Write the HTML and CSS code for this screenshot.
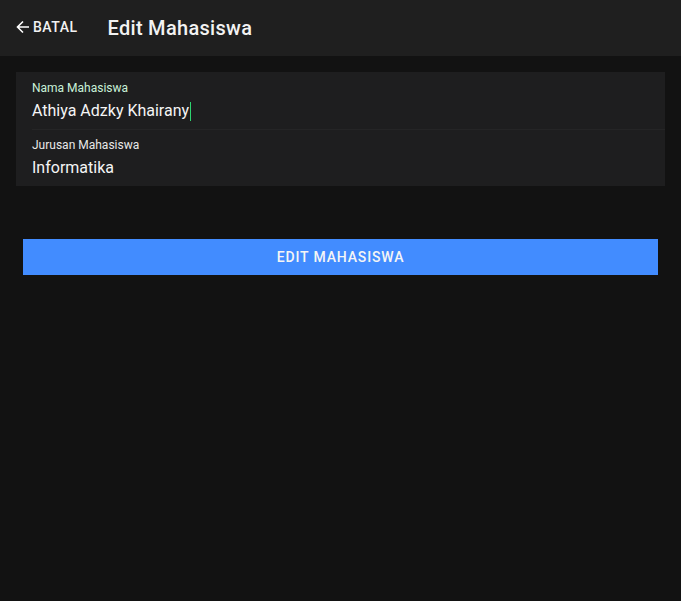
FILE: index.html
```html
<!DOCTYPE html>
<html>
<head>
<meta charset="utf-8">
<link rel="stylesheet" href="styles.css">
</head>
<body>
<header class="toolbar">
  <button class="back">
    <svg class="back-icon" width="16" height="16" viewBox="0 0 16 16"><path d="M14 8H2.5M8 2.5L2.5 8L8 13.5" fill="none" stroke="#fff" stroke-width="1.6"/></svg>
    <span>BATAL</span>
  </button>
  <h1 class="title">Edit Mahasiswa</h1>
</header>
<main class="content">
  <div class="list">
    <div class="item first">
      <div class="label focused">Nama Mahasiswa</div>
      <div class="value">Athiya Adzky Khairany<span class="caret"></span></div>
    </div>
    <div class="item last">
      <div class="label">Jurusan Mahasiswa</div>
      <div class="value">Informatika</div>
    </div>
  </div>
  <button class="submit">EDIT MAHASISWA</button>
</main>
</body>
</html>
```
FILE: styles.css
```css
* { box-sizing: border-box; }
html, body { margin: 0; padding: 0; }
body {
  background: #121212;
  font-family: Roboto, "Noto Sans", sans-serif;
  color: #fff;
  width: 681px;
  height: 601px;
}
.toolbar {
  height: 56px;
  background: #1f1f1f;
  display: flex;
  align-items: center;
  padding-left: 15px;
}
.back {
  background: none;
  border: 0;
  color: #f2f2f2;
  display: flex;
  align-items: center;
  padding: 0;
  font-family: inherit;
  font-size: 14px;
  font-weight: 500;
  letter-spacing: 0.5px;
  margin-top: -2px;
}
.back-icon { margin-right: 2px; }
.title {
  margin: -1px 0 0 30px;
  font-size: 20px;
  font-weight: 500;
  letter-spacing: 0.3px;
  color: #f2f2f2;
}
.content { padding: 16px; }
.list {
  background: #1e1e1f;
}
.item {
  margin-left: 16px;
  padding: 9px 0 7px;
  border-bottom: 1px solid #252526;
  height: 58px;
}
.item.last { border-bottom: 0; height: 56px; padding-top: 8px; }
.label {
  font-size: 12px;
  color: #e8e8e8;
  line-height: 14px;
}
.label.focused { color: #c9f1d9; }
.value {
  font-size: 16px;
  line-height: 20px;
  margin-top: 6px;
  color: #f5f5f5;
  display: flex;
  align-items: center;
}
.caret {
  display: inline-block;
  width: 1px;
  height: 19px;
  background: #2dd36f;
  margin-left: 1px;
}
.submit {
  display: block;
  margin: 53px 7px 0;
  width: calc(100% - 14px);
  height: 36px;
  background: #428cff;
  border: 0;
  color: #f5f5f5;
  font-family: inherit;
  font-size: 14px;
  font-weight: 500;
  letter-spacing: 0.85px;
  padding: 0;
}
```
